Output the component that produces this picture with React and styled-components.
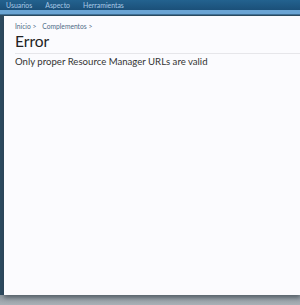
import React from "react";
import styled, { createGlobalStyle } from "styled-components";

const Global = createGlobalStyle`
  html, body { margin: 0; padding: 0; }
  body {
    width: 300px; height: 305px; overflow: hidden;
    font-family: Lato, "DejaVu Sans", sans-serif;
    background: #a3abb2;
  }
`;

const Page = styled.div`
  width: 300px; height: 305px;
  display: flex; flex-direction: column;
`;

const TopNav = styled.nav`
  height: 10px;
  background: linear-gradient(#23628f, #1b5079);
  display: flex; align-items: center; gap: 13px;
  padding-left: 6px;
`;

const NavItem = styled.span`
  font-size: 6.9px; color: #a9c9e6; line-height: 10px;
`;

const SubStrip = styled.div`
  height: 4px;
  background: #6aa4d4;
  border-bottom: 1px solid #3f6f96;
`;

const Body = styled.div`
  height: 280px;
  padding: 1px 0 0 4px;
  box-sizing: border-box;
  background: #2d4b61;
  position: relative;
  z-index: 1;
`;

const Panel = styled.main`
  height: 279px;
  box-sizing: border-box;
  background: #fbfbfe;
  padding: 5px 0 0 11px;
  box-shadow: 0 3px 4px rgba(40,50,60,0.5);
`;

const Crumbs = styled.div`
  font-size: 6.7px; color: #4f6b86; display: flex; gap: 6px;
  height: 10px; align-items: center;
`;

const Title = styled.h1`
  margin: 1px 0 0; font-weight: normal; font-size: 15.5px; color: #222;
  line-height: 18px;
  padding-bottom: 3px;
  border-bottom: 1px solid #e6e6ea;
`;

const Message = styled.p`
  margin: 2px 0 0; font-size: 9.6px; color: #333;
`;

const Bottom = styled.div`
  flex: 1;
  background: linear-gradient(#8f99a1, #a9b0b6);
`;

export default function App() {
  return (
    <Page>
      <Global />
      <TopNav>
        <NavItem>Usuarios</NavItem>
        <NavItem>Aspecto</NavItem>
        <NavItem>Herramientas</NavItem>
      </TopNav>
      <SubStrip />
      <Body>
        <Panel>
          <Crumbs><span>Inicio &gt;</span><span>Complementos &gt;</span></Crumbs>
          <Title>Error</Title>
          <Message>Only proper Resource Manager URLs are valid</Message>
        </Panel>
      </Body>
      <Bottom />
    </Page>
  );
}
